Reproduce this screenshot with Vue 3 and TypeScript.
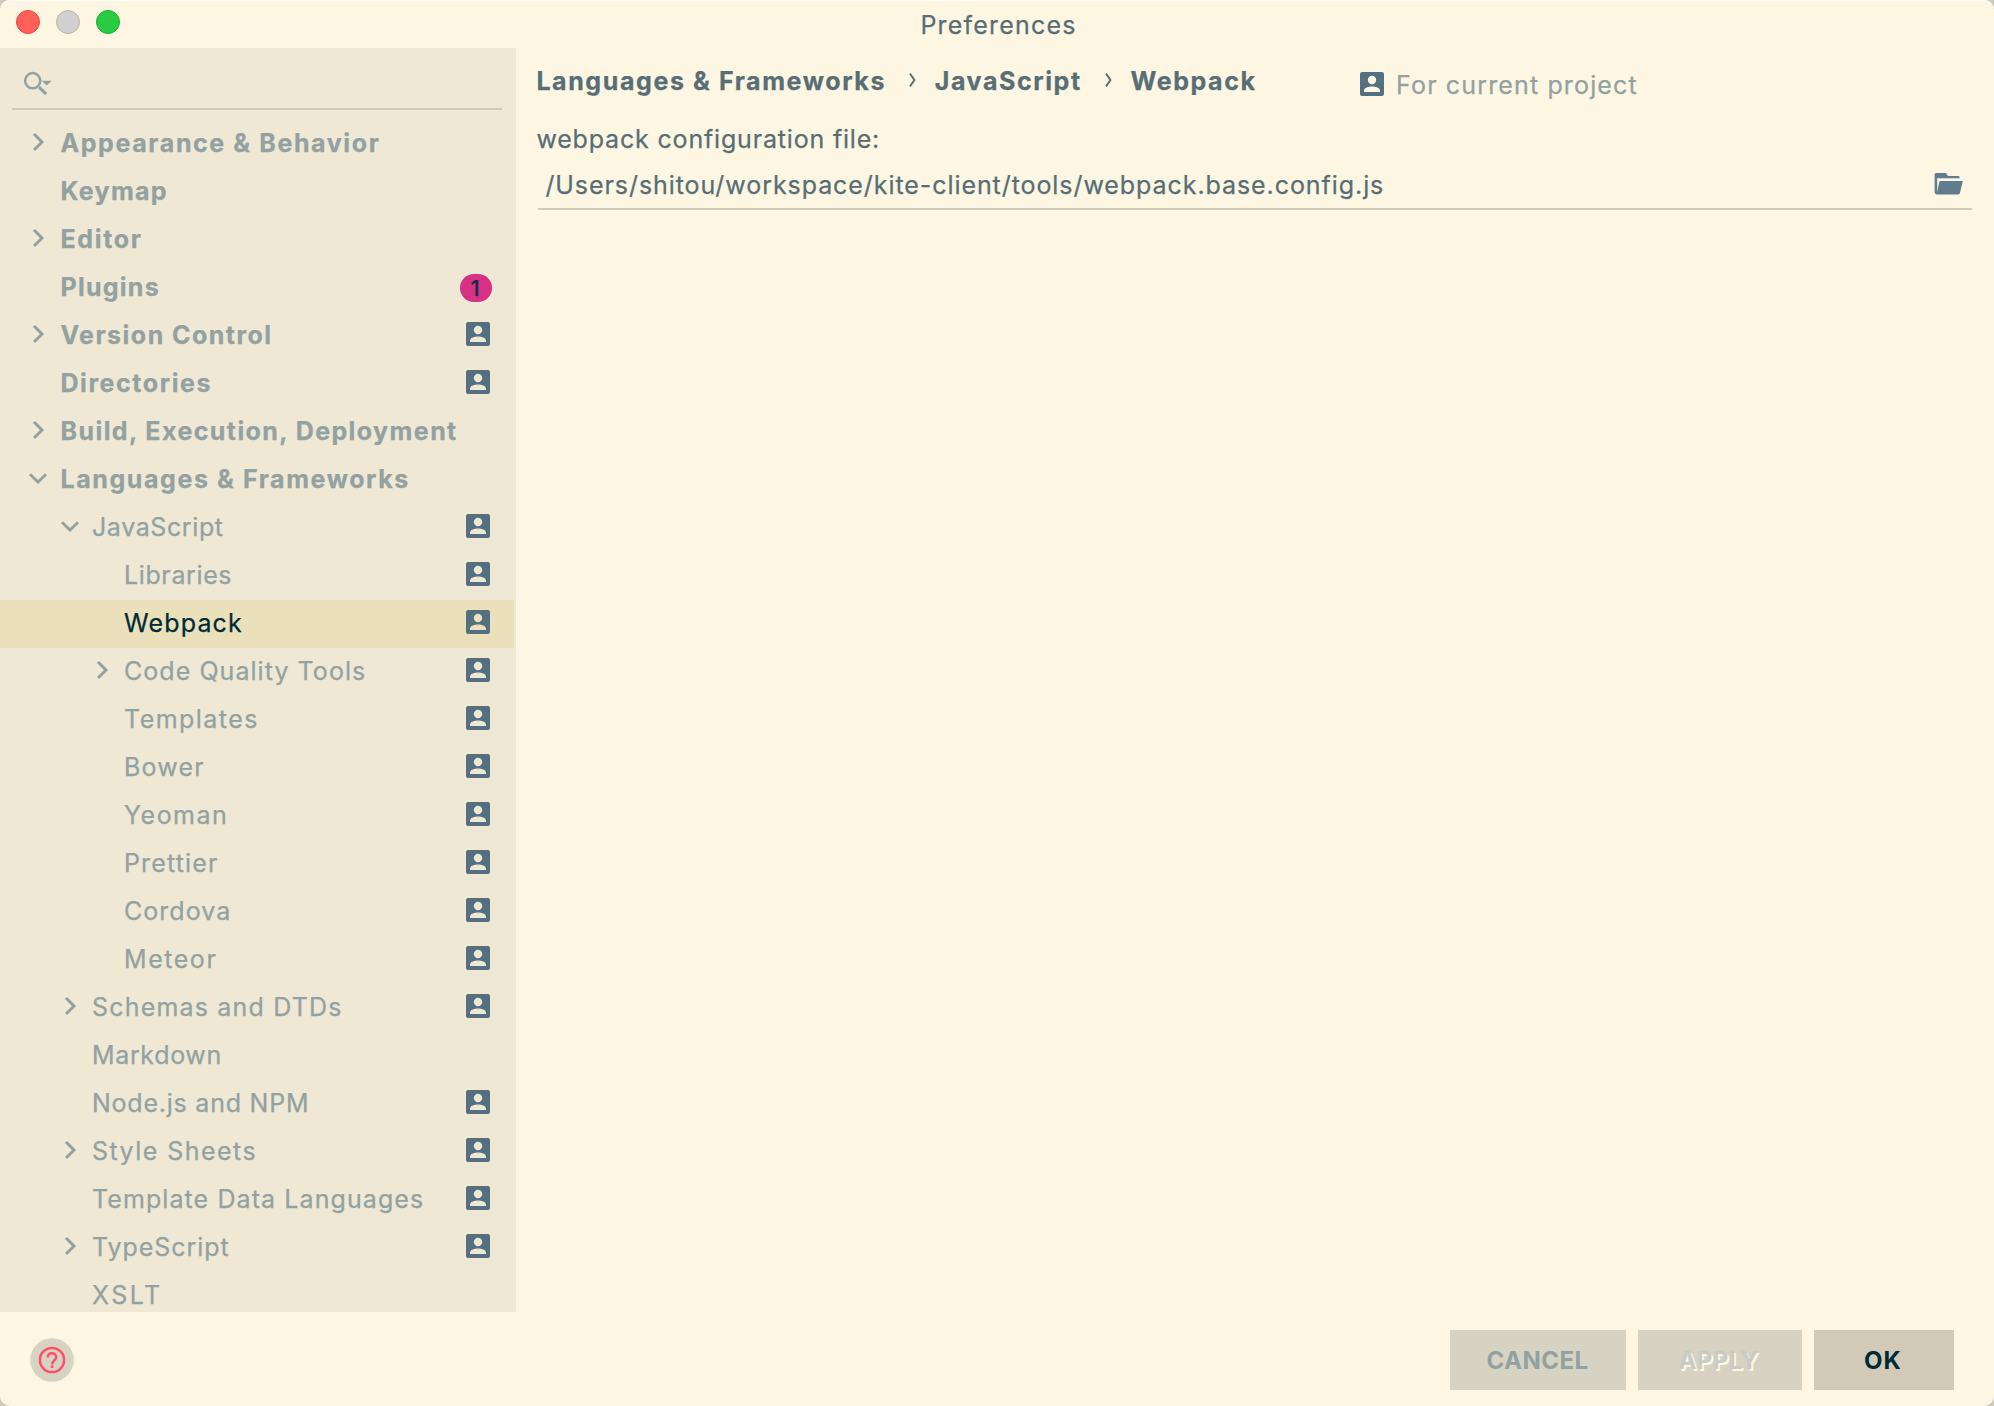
<script setup lang="ts">
interface TreeRow {
  label: string
  level: number
  spacing: number
  arrow?: 'right' | 'down'
  project?: boolean
  badge?: number
  selected?: boolean
}

const rows: TreeRow[] = [
  { label: 'Appearance & Behavior', level: 0, spacing: 1.6, arrow: 'right' },
  { label: 'Keymap', level: 0, spacing: 1.3 },
  { label: 'Editor', level: 0, spacing: 1.68, arrow: 'right' },
  { label: 'Plugins', level: 0, spacing: 1.25, badge: 1 },
  { label: 'Version Control', level: 0, spacing: 1.47, arrow: 'right', project: true },
  { label: 'Directories', level: 0, spacing: 1.57, project: true },
  { label: 'Build, Execution, Deployment', level: 0, spacing: 1.42, arrow: 'right' },
  { label: 'Languages & Frameworks', level: 0, spacing: 1.58, arrow: 'down' },
  { label: 'JavaScript', level: 1, spacing: 0.6, arrow: 'down', project: true },
  { label: 'Libraries', level: 2, spacing: 0.62, project: true },
  { label: 'Webpack', level: 2, spacing: 1.15, project: true, selected: true },
  { label: 'Code Quality Tools', level: 2, spacing: 1.05, arrow: 'right', project: true },
  { label: 'Templates', level: 2, spacing: 1.45, project: true },
  { label: 'Bower', level: 2, spacing: 1.2, project: true },
  { label: 'Yeoman', level: 2, spacing: 1.5, project: true },
  { label: 'Prettier', level: 2, spacing: 1.15, project: true },
  { label: 'Cordova', level: 2, spacing: 1.03, project: true },
  { label: 'Meteor', level: 2, spacing: 1.55, project: true },
  { label: 'Schemas and DTDs', level: 1, spacing: 1.18, arrow: 'right', project: true },
  { label: 'Markdown', level: 1, spacing: 0.65 },
  { label: 'Node.js and NPM', level: 1, spacing: 0.77, project: true },
  { label: 'Style Sheets', level: 1, spacing: 1.45, arrow: 'right', project: true },
  { label: 'Template Data Languages', level: 1, spacing: 1.09, project: true },
  { label: 'TypeScript', level: 1, spacing: 0.94, arrow: 'right', project: true },
  { label: 'XSLT', level: 1, spacing: 2.5 },
]

const personPath =
  'M2.2 0H21.8A2.2 2.2 0 0 1 24 2.2V21.8A2.2 2.2 0 0 1 21.8 24H2.2A2.2 2.2 0 0 1 0 21.8V2.2A2.2 2.2 0 0 1 2.2 0ZM12 3.8A4.2 4.2 0 1 0 12 12.2A4.2 4.2 0 1 0 12 3.8ZM4 20H20V18.3C20 15.8 15.2 14.4 12 14.4C8.8 14.4 4 15.8 4 18.3Z'
</script>

<template>
  <div class="window">
    <header class="titlebar">
      <div class="lights">
        <i class="light close"></i>
        <i class="light minimize"></i>
        <i class="light zoom"></i>
      </div>
      <span class="title">Preferences</span>
    </header>

    <div class="body">
      <aside class="sidebar">
        <div class="search">
          <svg width="32" height="28" viewBox="0 0 32 28" fill="none">
            <circle cx="10.7" cy="10.7" r="7.6" stroke="#93a1a1" stroke-width="2.5" />
            <path d="M17 17.2 24.2 24.2" stroke="#93a1a1" stroke-width="3" />
            <path d="M19.6 10.8H29.6L24.8 15.6Z" fill="#93a1a1" />
          </svg>
        </div>
        <ul class="tree">
          <li
            v-for="row in rows"
            :key="row.label"
            class="row"
            :class="[`level-${row.level}`, { selected: row.selected }]"
          >
            <span class="arrow">
              <svg v-if="row.arrow === 'right'" width="20" height="20" viewBox="0 0 20 20" fill="none">
                <path d="M6 2 14 10 6 18" stroke="#93a1a1" stroke-width="2.9" />
              </svg>
              <svg v-else-if="row.arrow === 'down'" width="20" height="20" viewBox="0 0 20 20" fill="none">
                <path d="M2 6.3 10 14 18 6.3" stroke="#93a1a1" stroke-width="2.9" />
              </svg>
            </span>
            <span class="label" :style="{ letterSpacing: row.spacing + 'px' }">{{ row.label }}</span>
            <span v-if="row.badge" class="badge">{{ row.badge }}</span>
            <svg v-if="row.project" class="person" width="24" height="24" viewBox="0 0 24 24">
              <path :d="personPath" fill="#536f80" fill-rule="evenodd" />
            </svg>
          </li>
        </ul>
      </aside>

      <main class="content">
        <div class="crumbs">
          <b>Languages &amp; Frameworks</b>
          <svg class="sep" width="7" height="16" viewBox="0 0 7 16" fill="none">
            <path d="M1 1.6 5.4 8 1 14.4" stroke="#586e75" stroke-width="1.9" />
          </svg>
          <b>JavaScript</b>
          <svg class="sep" width="7" height="16" viewBox="0 0 7 16" fill="none">
            <path d="M1 1.6 5.4 8 1 14.4" stroke="#586e75" stroke-width="1.9" />
          </svg>
          <b>Webpack</b>
          <span class="scope">
            <svg width="24" height="24" viewBox="0 0 24 24">
              <path :d="personPath" fill="#536f80" fill-rule="evenodd" />
            </svg>
            <span>For current project</span>
          </span>
        </div>
        <div class="field-label">webpack configuration file:</div>
        <div class="field">
          <span class="path">/Users/shitou/workspace/kite-client/tools/webpack.base.config.js</span>
          <svg class="folder" width="30" height="24" viewBox="0 0 30 24">
            <path
              d="M2.2 1H11.2Q12 1 12.4 1.6L14 4H24.2Q25.6 4 25.8 6.2H3.2V20L2.8 22.4Q.6 22 .6 20.2V2.6Q.6 1 2.2 1Z"
              fill="#5f7d8f"
            />
            <path d="M6.4 9H28.8L26 20.8Q25.6 22.4 24.2 22.4H2.6L5.4 9.8Q5.6 9 6.4 9Z" fill="#5f7d8f" />
          </svg>
        </div>
      </main>
    </div>

    <footer class="footer">
      <button class="help" aria-label="Help">
        <svg width="44" height="44" viewBox="0 0 44 44" fill="none">
          <circle cx="22" cy="22" r="21.8" fill="#d6d3c2" />
          <circle cx="22" cy="22" r="12.1" stroke="#ff4d6a" stroke-width="2.5" />
          <path
            d="M17.8 19.4C17.8 16.8 19.6 15.3 22 15.3S26.3 16.9 26.3 19.2C26.3 22 22.2 22.4 22.2 26.4"
            stroke="#ff4d6a"
            stroke-width="2.4"
          />
          <rect x="20.8" y="27.4" width="2.6" height="2.6" fill="#ff4d6a" />
        </svg>
      </button>
      <div class="actions">
        <button class="btn cancel">CANCEL</button>
        <button class="btn apply">APPLY</button>
        <button class="btn ok">OK</button>
      </div>
    </footer>
  </div>
</template>

<style>
body {
  margin: 0;
  background: #cfcbbb;
}
</style>

<style scoped>
.window {
  box-sizing: border-box;
  width: 1994px;
  height: 1406px;
  display: flex;
  flex-direction: column;
  overflow: hidden;
  border-radius: 10px;
  background: #fdf6e3;
  box-shadow: inset 0 1px 0 #fffdf8;
  font: 400 25px/32px Inter, 'Liberation Sans', sans-serif;
  -webkit-text-stroke: 0.25px;
  color: #586e75;
  white-space: nowrap;
}
svg {
  display: block;
  flex: none;
}
.titlebar {
  flex: none;
  display: grid;
  grid-template-columns: 1fr auto 1fr;
  height: 48px;
}
.lights {
  display: flex;
  gap: 16px;
  padding: 10px 0 0 16px;
}
.light {
  box-sizing: border-box;
  width: 24px;
  height: 24px;
  border-radius: 50%;
}
.close {
  background: #ff6059;
  border: 1px solid #e8453e;
}
.minimize {
  background: #d0d0d0;
  border: 1px solid #b6b6a9;
}
.zoom {
  background: #29cc42;
  border: 1px solid #1bad2e;
}
.title {
  line-height: 50px;
  letter-spacing: 1.2px;
  margin-left: 3px;
}
.body {
  flex: none;
  display: flex;
  height: 1264px;
}
.sidebar {
  width: 516px;
  flex: none;
  overflow: hidden;
  background: #eee8d5;
}
.search {
  box-sizing: border-box;
  height: 62px;
  margin: 0 14px 10px 12px;
  padding: 22px 0 0 10px;
  border-bottom: 2px solid #d1cab7;
}
.tree {
  list-style: none;
  margin: 0;
  padding: 0 2px 0 0;
}
.row {
  box-sizing: border-box;
  display: flex;
  align-items: center;
  height: 48px;
  padding: 0 24px 2px 28px;
  color: #93a1a1;
  -webkit-text-stroke-color: currentColor;
}
.row .arrow {
  width: 20px;
  height: 20px;
  margin: -2px 12px 0 0;
  flex: none;
}
.level-0 {
  font-weight: 700;
}
.level-0 .arrow {
  margin-right: 12.5px;
}
.level-1 {
  padding-left: 60px;
}
.level-2 {
  padding-left: 92px;
}
.label {
  flex: 1;
}
.person {
  margin-top: -2px;
}
.selected {
  background: #eae1bb;
  color: #002b36;
}
.badge {
  width: 32px;
  height: 28px;
  margin: 2px -2px 0 0;
  border-radius: 14px;
  background: #d73184;
  color: #12303c;
  font-size: 22px;
  font-weight: 500;
  line-height: 28px;
  text-align: center;
  text-indent: -2px;
}
.content {
  flex: 1;
  padding: 17px 22px 0 20.4px;
}
.crumbs {
  display: flex;
  height: 32px;
}
.crumbs b {
  font-weight: 700;
  letter-spacing: 1.59px;
}
.sep {
  margin: 7px 18.5px 0 23.2px;
}
.scope {
  display: flex;
  gap: 12px;
  margin-left: 103.5px;
  padding-top: 4px;
  letter-spacing: 1.14px;
  color: #93a1a1;
}
.scope svg {
  margin-top: 3px;
}
.field-label {
  margin-top: 26px;
  letter-spacing: 0.82px;
}
.field {
  box-sizing: border-box;
  display: flex;
  justify-content: space-between;
  height: 55px;
  margin-left: 1.6px;
  padding: 14px 8px 0 7.4px;
  border-bottom: 2px solid #d1cab7;
}
.path {
  letter-spacing: 0.93px;
}
.folder {
  margin-top: 3px;
}
.footer {
  flex: 1;
  display: flex;
  justify-content: space-between;
  align-items: flex-start;
}
button {
  border: 0;
  padding: 0;
  font: inherit;
  background: none;
}
.help {
  margin: 26px 0 0 30px;
}
.actions {
  display: flex;
  gap: 12px;
  margin: 18px 40px 0 0;
}
.btn {
  height: 60px;
  padding-top: 2px;
  font-size: 24px;
  font-weight: 700;
  line-height: 58px;
  background: #d6d3c2;
  -webkit-text-stroke: 0;
}
.cancel {
  width: 176px;
  padding-right: 1px;
  letter-spacing: 0.47px;
  color: #93a1a1;
}
.apply {
  width: 164px;
  padding-right: 3px;
  letter-spacing: 0.37px;
  color: #c8cbc6;
  text-shadow: 2px 2px 0 #fdf6e3;
}
.ok {
  width: 140px;
  padding-right: 2px;
  letter-spacing: 1.2px;
  background: #d2cab7;
  color: #002b36;
}
</style>
